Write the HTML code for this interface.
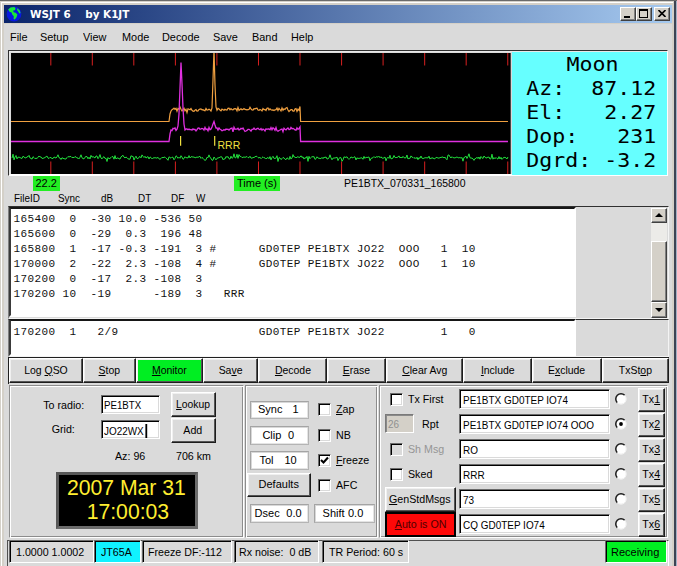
<!DOCTYPE html>
<html><head><meta charset="utf-8"><title>WSJT 6 by K1JT</title>
<style>
*{box-sizing:border-box;margin:0;padding:0}
html,body{width:677px;height:566px;overflow:hidden;background:#dadada}
body{position:relative;font-family:"Liberation Sans",sans-serif;font-size:11px;line-height:13px;color:#000}
.a{position:absolute;white-space:nowrap}
.t{display:inline-block;white-space:nowrap}
u{text-decoration:underline}
.title{left:4px;top:5px;width:668px;height:18px;background:linear-gradient(90deg,#0a246a 0%,#a6caf0 100%)}
.ttext{left:30px;top:7.1px;color:#fff;font:bold 10.5px/14px "DejaVu Sans","Liberation Sans",sans-serif;white-space:pre;transform:scaleX(.99);transform-origin:0 0}
.cap{top:7px;width:16px;height:14px;background:#d4d0c8;border:1px solid;border-color:#fff #404040 #404040 #fff;box-shadow:inset -1px -1px #808080}
.btn{background:#dadada;border:1px solid;border-color:#fff #1c1c1c #1c1c1c #fff;box-shadow:inset -1px -1px #555,inset 1px 1px #f0f0f0;text-align:center}
.sunk{border:1px solid;border-color:#6a6a6a #fff #fff #6a6a6a;box-shadow:inset 1px 1px #000,inset -1px -1px #dadada;background:#fff}
.groove{border:1px solid;border-color:#8c8c8c #fff #fff #8c8c8c;box-shadow:inset 1px 1px #fff,inset -1px -1px #8c8c8c}
.mono{font-family:"Liberation Mono",monospace;font-size:11px;letter-spacing:0.4px;line-height:15px;white-space:pre;color:#111}
.ridge{background:#fff;border:1px solid;border-color:#a4a4a4 #b4b4b4 #b4b4b4 #a4a4a4;box-shadow:inset 1px 1px #d8d8d8,inset -1px -1px #e4e4e4}
.tfr{border:1px solid;border-color:#303030 #f4f4f4 #f4f4f4 #808080}
.tw{background:#fff;border:2px solid;border-color:#161616 #fff #fff #3a3a3a}
.nbtn{background:#d4d0c8;border:1px solid;border-color:#fff #404040 #404040 #fff;box-shadow:inset -1px -1px #808080,inset 1px 1px #d4d0c8}
.cb{width:13px;height:13px;background:#fff;border:1px solid;border-color:#6a6a6a #fff #fff #6a6a6a;box-shadow:inset 1px 1px #000,inset -1px -1px #dadada}
.rb{width:12px;height:12px;border-radius:50%;background:#fff;border:1px solid;border-color:#6a6a6a #fff #fff #6a6a6a;box-shadow:inset 1px 1px #303030}
.st{top:540px;height:22.8px;border:1px solid;border-color:#6a6a6a #fff #fff #6a6a6a;box-shadow:inset 1px 1px #000}
</style></head><body>

<!-- window frame -->
<div class="a" style="left:0;top:0;width:677px;height:24px;background:#d4d0c8"></div>
<div class="a" style="left:0;top:0;width:4px;height:566px;background:#d4d0c8"></div>
<div class="a" style="left:672px;top:0;width:5px;height:566px;background:#d4d0c8"></div>
<div class="a" style="left:0;top:0;width:677px;height:1px;background:#6a6a6a"></div>
<div class="a" style="left:1px;top:2px;width:672px;height:1px;background:#fff"></div>
<div class="a" style="left:1px;top:2px;width:1px;height:564px;background:#fff"></div>
<div class="a" style="left:674px;top:1px;width:3px;height:565px;background:#a4b0c4"></div>
<div class="a" style="left:674px;top:1px;width:1.6px;height:565px;background:#3c4454"></div>
<div class="a title"></div>
<svg class="a" style="left:6px;top:6px" width="16" height="16" viewBox="0 0 16 16"><circle cx="8" cy="8" r="7.4" fill="#0818e0"/><path d="M2.2 3.6 L4.5 1.6 L8.2 1 L9.6 2.2 L9 4.2 L7.2 4.6 L7.6 6.2 L9.6 6.8 L11.4 8.6 L10.6 11.2 L8.8 13.4 L7.6 13 L7.8 10.2 L6.2 8.4 L5.6 6.4 L3.6 5.8 Z" fill="#18e838"/><path d="M11.4 2.2 L13.6 4.2 L14.6 7 L13.4 7.4 L12.2 5.4 L11 4 Z" fill="#18e838"/></svg>
<div class="a ttext">WSJT 6    by K1JT</div>
<div class="a cap" style="left:620px"><div class="a" style="left:3px;top:8px;width:6px;height:2px;background:#000"></div></div>
<div class="a cap" style="left:636px"><div class="a" style="left:2px;top:1px;width:9px;height:9px;border:1px solid #000;border-top-width:2px"></div></div>
<div class="a cap" style="left:654px"><svg class="a" style="left:3px;top:2px" width="8" height="7" viewBox="0 0 8 7"><path d="M0.5 0 L7.5 7 M7.5 0 L0.5 7" stroke="#000" stroke-width="1.6"/></svg></div>

<div class="a menu" style="left:10px;top:30.9px;transform:scaleX(0.99);transform-origin:0 0;">File</div>
<div class="a menu" style="left:40px;top:30.9px;transform:scaleX(0.99);transform-origin:0 0;">Setup</div>
<div class="a menu" style="left:83px;top:30.9px;transform:scaleX(0.99);transform-origin:0 0;">View</div>
<div class="a menu" style="left:122px;top:30.9px;transform:scaleX(0.99);transform-origin:0 0;">Mode</div>
<div class="a menu" style="left:162px;top:30.9px;transform:scaleX(0.99);transform-origin:0 0;">Decode</div>
<div class="a menu" style="left:213px;top:30.9px;transform:scaleX(0.99);transform-origin:0 0;">Save</div>
<div class="a menu" style="left:252px;top:30.9px;transform:scaleX(0.99);transform-origin:0 0;">Band</div>
<div class="a menu" style="left:290.5px;top:30.9px;transform:scaleX(0.99);transform-origin:0 0;">Help</div>
<div class="a" style="left:8px;top:50px;width:660px;height:126px;border:1px solid;border-color:#303030 #fff #fff #303030;box-shadow:inset 1px 1px #e8e8e8,inset -1px -1px #fff"></div>
<svg style="position:absolute;left:11px;top:53px" width="499.7" height="121.2" viewBox="0 0 499.7 121.2">
<rect width="499.7" height="121.2" fill="#000"/>
<g stroke="#d82020" stroke-width="1"><line x1="39.8" y1="0" x2="39.8" y2="12.5"/><line x1="39.8" y1="108.5" x2="39.8" y2="121.2"/><line x1="81.3" y1="0" x2="81.3" y2="12.5"/><line x1="81.3" y1="108.5" x2="81.3" y2="121.2"/><line x1="122.8" y1="0" x2="122.8" y2="12.5"/><line x1="122.8" y1="108.5" x2="122.8" y2="121.2"/><line x1="164.4" y1="0" x2="164.4" y2="12.5"/><line x1="164.4" y1="108.5" x2="164.4" y2="121.2"/><line x1="205.9" y1="0" x2="205.9" y2="12.5"/><line x1="205.9" y1="108.5" x2="205.9" y2="121.2"/><line x1="247.5" y1="0" x2="247.5" y2="12.5"/><line x1="247.5" y1="108.5" x2="247.5" y2="121.2"/><line x1="289.0" y1="0" x2="289.0" y2="12.5"/><line x1="289.0" y1="108.5" x2="289.0" y2="121.2"/><line x1="330.6" y1="0" x2="330.6" y2="12.5"/><line x1="330.6" y1="108.5" x2="330.6" y2="121.2"/><line x1="372.1" y1="0" x2="372.1" y2="12.5"/><line x1="372.1" y1="108.5" x2="372.1" y2="121.2"/><line x1="413.7" y1="0" x2="413.7" y2="12.5"/><line x1="413.7" y1="108.5" x2="413.7" y2="121.2"/><line x1="455.2" y1="0" x2="455.2" y2="12.5"/><line x1="455.2" y1="108.5" x2="455.2" y2="121.2"/><line x1="496.8" y1="0" x2="496.8" y2="12.5"/><line x1="496.8" y1="108.5" x2="496.8" y2="121.2"/></g>
<polyline fill="none" stroke="#22e03c" stroke-width="1" points="1.0,105.1 2.0,101.2 3.0,106.9 4.0,104.0 5.0,102.5 6.0,105.9 7.0,104.1 8.0,104.3 9.0,104.4 10.0,105.3 11.0,105.4 12.0,103.2 13.0,104.0 14.0,104.8 15.0,105.0 16.0,103.7 17.0,103.8 18.0,102.4 19.0,105.1 20.0,105.3 21.0,106.2 22.0,103.7 23.0,104.6 24.0,105.7 25.0,105.1 26.0,105.6 27.0,104.2 28.0,103.0 29.0,104.0 30.0,103.9 31.0,105.5 32.0,105.3 33.0,105.0 34.0,104.5 35.0,103.7 36.0,103.1 37.0,105.1 38.0,105.5 39.0,104.3 40.0,104.8 41.0,105.4 42.0,105.6 43.0,104.0 44.0,104.5 45.0,105.1 46.0,103.8 47.0,101.8 48.0,104.7 49.0,105.0 50.0,106.5 51.0,104.7 52.0,105.4 53.0,105.6 54.0,106.0 55.0,106.0 56.0,104.5 57.0,103.5 58.0,104.1 59.0,103.4 60.0,103.6 61.0,104.7 62.0,104.2 63.0,104.8 64.0,103.5 65.0,104.1 66.0,105.2 67.0,104.9 68.0,105.9 69.0,104.2 70.0,101.8 71.0,104.8 72.0,105.6 73.0,105.9 74.0,104.2 75.0,103.5 76.0,103.6 77.0,105.8 78.0,104.2 79.0,106.0 80.0,102.4 81.0,104.3 82.0,103.5 83.0,104.3 84.0,105.0 85.0,103.0 86.0,103.1 87.0,105.7 88.0,104.2 89.0,101.6 90.0,105.1 91.0,105.9 92.0,104.4 93.0,103.7 94.0,105.5 95.0,105.3 96.0,108.5 97.0,104.5 98.0,105.9 99.0,105.3 100.0,104.6 101.0,103.5 102.0,103.7 103.0,106.2 104.0,102.6 105.0,106.0 106.0,105.0 107.0,105.0 108.0,105.7 109.0,106.1 110.0,103.9 111.0,103.1 112.0,102.3 113.0,104.2 114.0,104.9 115.0,104.0 116.0,104.7 117.0,105.9 118.0,106.1 119.0,106.2 120.0,102.7 121.0,103.5 122.0,103.4 123.0,107.1 124.0,104.8 125.0,103.2 126.0,105.5 127.0,105.7 128.0,104.1 129.0,103.5 130.0,104.9 131.0,101.9 132.0,103.3 133.0,104.5 134.0,103.3 135.0,105.1 136.0,104.2 137.0,103.6 138.0,106.0 139.0,104.0 140.0,104.5 141.0,105.9 142.0,104.9 143.0,105.0 144.0,104.6 145.0,105.0 146.0,105.1 147.0,104.3 148.0,105.9 149.0,106.2 150.0,105.6 151.0,104.3 152.0,104.9 153.0,104.1 154.0,104.2 155.0,105.2 156.0,105.9 157.0,107.3 158.0,103.8 159.0,104.5 160.0,105.2 161.0,104.2 162.0,104.3 163.0,106.8 164.0,105.4 165.0,102.8 166.0,103.6 167.0,105.3 168.0,104.2 169.0,105.3 170.0,102.7 171.0,104.1 172.0,106.3 173.0,105.6 174.0,103.7 175.0,104.9 176.0,104.5 177.0,105.1 178.0,102.6 179.0,105.0 180.0,103.8 181.0,103.7 182.0,104.2 183.0,103.9 184.0,104.8 185.0,104.6 186.0,103.9 187.0,104.5 188.0,103.7 189.0,103.4 190.0,105.4 191.0,104.4 192.0,105.3 193.0,106.6 194.0,107.4 195.0,106.9 196.0,104.3 197.0,104.7 198.0,101.9 199.0,104.5 200.0,105.2 201.0,107.3 202.0,107.2 203.0,104.0 204.0,105.4 205.0,106.9 206.0,105.3 207.0,105.0 208.0,104.7 209.0,104.2 210.0,103.7 211.0,104.1 212.0,106.8 213.0,105.9 214.0,106.0 215.0,103.5 216.0,104.4 217.0,103.5 218.0,105.7 219.0,106.1 220.0,103.2 221.0,105.3 222.0,104.6 223.0,100.8 224.0,104.9 225.0,104.7 226.0,101.3 227.0,105.4 228.0,101.6 229.0,103.5 230.0,103.4 231.0,104.6 232.0,104.5 233.0,103.8 234.0,104.5 235.0,103.9 236.0,103.6 237.0,104.6 238.0,104.7 239.0,103.2 240.0,105.1 241.0,105.2 242.0,104.5 243.0,104.5 244.0,103.9 245.0,103.2 246.0,103.5 247.0,104.5 248.0,105.1 249.0,104.2 250.0,105.7 251.0,104.7 252.0,103.8 253.0,104.8 254.0,104.9 255.0,105.9 256.0,105.1 257.0,104.4 258.0,105.8 259.0,103.6 260.0,106.9 261.0,104.6 262.0,103.3 263.0,105.5 264.0,105.3 265.0,105.2 266.0,102.7 267.0,108.5 268.0,104.6 269.0,105.0 270.0,106.6 271.0,105.7 272.0,104.5 273.0,104.9 274.0,106.2 275.0,106.7 276.0,104.9 277.0,105.4 278.0,106.6 279.0,103.4 280.0,106.1 281.0,105.1 282.0,101.6 283.0,104.0 284.0,103.9 285.0,105.0 286.0,104.0 287.0,103.8 288.0,104.4 289.0,104.2 290.0,102.8 291.0,104.6 292.0,103.8 293.0,106.1 294.0,104.6 295.0,105.2 296.0,103.4 297.0,108.4 298.0,103.4 299.0,105.7 300.0,104.6 301.0,103.4 302.0,104.1 303.0,103.5 304.0,106.4 305.0,105.8 306.0,103.8 307.0,105.0 308.0,105.3 309.0,105.4 310.0,105.7 311.0,104.4 312.0,105.7 313.0,104.1 314.0,104.7 315.0,103.9 316.0,106.0 317.0,105.8 318.0,104.9 319.0,101.8 320.0,104.8 321.0,106.8 322.0,105.1 323.0,105.1 324.0,104.9 325.0,104.8 326.0,104.1 327.0,107.6 328.0,105.4 329.0,104.6 330.0,104.7 331.0,108.3 332.0,106.9 333.0,103.8 334.0,104.4 335.0,104.3 336.0,103.8 337.0,105.4 338.0,106.4 339.0,105.4 340.0,103.9 341.0,104.6 342.0,104.9 343.0,103.9 344.0,103.9 345.0,107.0 346.0,104.8 347.0,105.6 348.0,105.2 349.0,105.4 350.0,104.8 351.0,104.9 352.0,106.3 353.0,103.4 354.0,105.4 355.0,104.2 356.0,104.6 357.0,104.3 358.0,104.0 359.0,107.7 360.0,105.5 361.0,105.1 362.0,104.7 363.0,103.6 364.0,104.7 365.0,104.2 366.0,103.5 367.0,104.3 368.0,103.2 369.0,104.8 370.0,103.8 371.0,105.1 372.0,105.2 373.0,104.9 374.0,104.0 375.0,107.8 376.0,105.3 377.0,104.2 378.0,105.4 379.0,102.3 380.0,105.8 381.0,105.6 382.0,105.1 383.0,102.5 384.0,104.5 385.0,104.6 386.0,104.4 387.0,104.1 388.0,102.9 389.0,105.0 390.0,104.1 391.0,105.0 392.0,103.4 393.0,104.7 394.0,104.9 395.0,104.8 396.0,102.0 397.0,106.0 398.0,105.3 399.0,105.4 400.0,102.9 401.0,104.2 402.0,104.4 403.0,105.4 404.0,104.5 405.0,105.7 406.0,104.2 407.0,106.7 408.0,104.6 409.0,105.4 410.0,103.0 411.0,105.3 412.0,105.4 413.0,105.4 414.0,104.6 415.0,104.9 416.0,104.7 417.0,105.0 418.0,103.2 419.0,106.1 420.0,104.8 421.0,105.5 422.0,104.6 423.0,106.0 424.0,105.5 425.0,104.7 426.0,104.3 427.0,105.2 428.0,105.0 429.0,104.8 430.0,104.3 431.0,104.3 432.0,103.9 433.0,105.0 434.0,104.1 435.0,105.8 436.0,106.8 437.0,102.1 438.0,102.0 439.0,103.9 440.0,105.0 441.0,103.7 442.0,104.7 443.0,104.7 444.0,105.0 445.0,104.4 446.0,104.0 447.0,104.6 448.0,105.0 449.0,104.4 450.0,105.2 451.0,104.5 452.0,108.2 453.0,104.4 454.0,104.2 455.0,103.1 456.0,105.5 457.0,103.5 458.0,100.8 459.0,104.8 460.0,105.1 461.0,105.1 462.0,105.8 463.0,107.4 464.0,105.6 465.0,105.5 466.0,104.2 467.0,105.6 468.0,104.0 469.0,106.2 470.0,103.5 471.0,104.8 472.0,105.5 473.0,103.0 474.0,104.0 475.0,105.3 476.0,104.4 477.0,104.4 478.0,104.0 479.0,106.1 480.0,105.7 481.0,101.2 482.0,106.2 483.0,104.6 484.0,105.8 485.0,104.5 486.0,105.5 487.0,106.1 488.0,103.6 489.0,106.0 490.0,104.3 491.0,106.4 492.0,105.2 493.0,104.3 494.0,104.5 495.0,104.8 496.0,106.0 497.0,104.0"/>
<polyline fill="none" stroke="#f0a040" stroke-width="1.2" points="0.0,68.5 158.0,68.5 159.0,61.0 160.0,58.0 161.0,56.7 162.0,56.1 163.0,55.2 164.0,56.3 165.0,55.3 166.0,58.2 167.0,55.4 168.0,56.2 169.0,54.0 170.0,56.3 171.0,58.0 172.0,56.5 173.0,55.2 174.0,57.7 175.0,56.3 176.0,59.6 177.0,55.8 178.0,56.2 179.0,56.7 180.0,55.5 181.0,57.3 182.0,58.1 183.0,58.4 184.0,57.2 185.0,56.6 186.0,58.0 187.0,57.9 188.0,56.5 189.0,56.2 190.0,55.9 191.0,56.9 192.0,56.6 193.0,57.4 194.0,57.7 195.0,55.5 196.0,57.1 197.0,57.0 198.0,56.3 199.0,56.8 200.0,58.0 201.0,55.0 202.0,27.0 203.0,-3.0 204.0,32.0 205.0,54.0 206.0,57.2 207.0,55.4 208.0,55.9 209.0,57.0 210.0,57.9 211.0,56.1 212.0,56.7 213.0,57.3 214.0,56.3 215.0,56.9 216.0,57.0 217.0,55.3 218.0,55.1 219.0,56.8 220.0,55.6 221.0,56.6 222.0,56.8 223.0,55.8 224.0,55.6 225.0,55.8 226.0,57.8 227.0,54.4 228.0,57.4 229.0,56.5 230.0,55.8 231.0,56.8 232.0,56.4 233.0,55.6 234.0,56.4 235.0,56.6 236.0,56.9 237.0,56.6 238.0,56.4 239.0,54.3 240.0,55.9 241.0,57.0 242.0,57.1 243.0,55.7 244.0,55.9 245.0,55.4 246.0,55.2 247.0,57.0 248.0,57.4 249.0,56.5 250.0,56.9 251.0,57.9 252.0,55.5 253.0,56.6 254.0,56.5 255.0,57.5 256.0,55.2 257.0,55.0 258.0,57.0 259.0,55.9 260.0,56.8 261.0,57.2 262.0,57.0 263.0,57.5 264.0,56.8 265.0,56.6 266.0,55.1 267.0,57.5 268.0,55.3 269.0,56.5 270.0,57.9 271.0,55.0 272.0,57.3 273.0,55.8 274.0,56.5 275.0,55.0 276.0,54.6 277.0,57.0 278.0,58.6 279.0,57.4 280.0,56.7 281.0,56.7 282.0,58.2 283.0,58.2 284.0,56.0 285.0,55.6 286.0,58.4 287.0,56.2 288.0,57.3 289.0,53.5 289.6,68.5 497.0,68.5"/>
<polyline fill="none" stroke="#e030e0" stroke-width="1.3" points="0.0,88.5 158.0,88.5 159.0,81.0 160.0,77.0 161.0,77.6 162.0,75.4 163.0,75.7 164.0,74.8 165.0,77.5 166.0,76.1 167.0,73.0 168.0,61.0 169.0,35.0 170.0,9.5 171.0,31.0 172.0,55.0 173.0,71.0 174.0,77.0 175.0,76.0 176.0,76.0 177.0,76.8 178.0,76.0 179.0,76.8 180.0,76.4 181.0,77.2 182.0,75.9 183.0,76.5 184.0,76.5 185.0,77.9 186.0,76.7 187.0,75.2 188.0,75.0 189.0,76.3 190.0,75.9 191.0,75.4 192.0,75.7 193.0,77.1 194.0,74.4 195.0,76.6 196.0,76.0 197.0,77.9 198.0,74.5 199.0,76.8 200.0,76.1 201.0,74.0 202.0,71.0 203.0,68.5 204.0,72.0 205.0,75.0 206.0,74.9 207.0,77.0 208.0,74.9 209.0,76.2 210.0,76.8 211.0,77.8 212.0,77.4 213.0,76.6 214.0,77.2 215.0,76.1 216.0,76.4 217.0,76.3 218.0,77.2 219.0,76.1 220.0,75.3 221.0,75.1 222.0,78.9 223.0,74.2 224.0,76.2 225.0,76.1 226.0,76.1 227.0,75.3 228.0,76.9 229.0,76.4 230.0,75.3 231.0,75.9 232.0,75.0 233.0,76.8 234.0,78.4 235.0,78.0 236.0,77.4 237.0,76.3 238.0,76.3 239.0,76.9 240.0,78.1 241.0,76.4 242.0,76.3 243.0,75.0 244.0,76.4 245.0,76.5 246.0,75.6 247.0,75.3 248.0,76.3 249.0,76.7 250.0,75.6 251.0,77.1 252.0,76.0 253.0,76.7 254.0,78.0 255.0,75.8 256.0,76.3 257.0,76.0 258.0,76.0 259.0,76.7 260.0,74.6 261.0,76.7 262.0,74.8 263.0,75.6 264.0,77.2 265.0,74.5 266.0,77.7 267.0,78.3 268.0,77.5 269.0,77.0 270.0,76.4 271.0,76.1 272.0,78.7 273.0,75.2 274.0,76.3 275.0,76.9 276.0,75.8 277.0,75.0 278.0,76.6 279.0,76.4 280.0,74.5 281.0,75.7 282.0,75.5 283.0,76.0 284.0,76.9 285.0,77.2 286.0,74.9 287.0,76.3 288.0,75.6 289.0,74.0 289.6,88.5 497.0,88.5"/>
<g stroke="#f0e040" stroke-width="1.2"><line x1="169.6" y1="83" x2="169.6" y2="92.69999999999999"/><line x1="203.7" y1="83" x2="203.7" y2="92.69999999999999"/></g>
<text x="206.5" y="95.80000000000001" fill="#f0e040" font-family="Liberation Sans, sans-serif" font-size="10.5">RRR</text>
</svg>
<div class="a" style="left:511.5px;top:51.5px;width:155px;height:123.2px;background:#66ffff"></div>
<div class="a" style="left:512px;top:52px;width:155px;height:122px;font-family:'DejaVu Sans Mono',monospace;font-size:19.6px;line-height:24px;transform:scaleX(1.102);transform-origin:0 0"><div class="a" style="left:2.8px;top:0.5px;width:140.6px;text-align:center">Moon</div><div class="a" style="left:13px;top:25px;white-space:pre">Az:  87.12
El:   2.27
Dop:   231
Dgrd: -3.2</div></div>

<div class="a" style="left:33px;top:176.3px;width:27.4px;height:14.6px;background:#22ee22"></div>
<div class="a lbl" style="left:35.5px;top:177.0px;transform:scaleX(1.0);transform-origin:0 0;">22.2</div>
<div class="a" style="left:234px;top:176.3px;width:45.5px;height:14.8px;background:#22ee22"></div>
<div class="a lbl" style="left:237px;top:177.0px;transform:scaleX(1.0);transform-origin:0 0;">Time (s)</div>
<div class="a lbl" style="left:344.2px;top:176.8px;transform:scaleX(0.95);transform-origin:0 0;">PE1BTX_070331_165800</div>
<div class="a lbl" style="left:14px;top:191.8px;transform:scaleX(0.9);transform-origin:0 0;">FileID</div>
<div class="a lbl" style="left:58px;top:191.8px;transform:scaleX(0.9);transform-origin:0 0;">Sync</div>
<div class="a lbl" style="left:100.5px;top:191.8px;transform:scaleX(0.9);transform-origin:0 0;">dB</div>
<div class="a lbl" style="left:137.5px;top:191.8px;transform:scaleX(0.9);transform-origin:0 0;">DT</div>
<div class="a lbl" style="left:171px;top:191.8px;transform:scaleX(0.9);transform-origin:0 0;">DF</div>
<div class="a lbl" style="left:195.5px;top:191.8px;transform:scaleX(0.9);transform-origin:0 0;">W</div>
<div class="a tfr" style="left:8px;top:206px;width:661px;height:113px"></div>
<div class="a tw" style="left:9px;top:207px;width:566.5px;height:110px"></div>
<div class="a mono" style="left:13.6px;top:211.9px">165400  0  -30 10.0 -536 50
165600  0  -29  0.3  196 48
165800  1  -17 -0.3 -191  3 #      GD0TEP PE1BTX JO22  OOO   1  10
170000  2  -22  2.3 -108  4 #      GD0TEP PE1BTX JO22  OOO   1  10
170200  0  -17  2.3 -108  3
170200 10  -19      -189  3   RRR</div>
<div class="a" style="left:651px;top:208px;width:16px;height:110px;background:#ecebe8"></div>
<div class="a nbtn" style="left:651px;top:208px;width:16px;height:15px"><div class="a" style="left:3px;top:4px;border:4px solid transparent;border-top:0;border-bottom:4px solid #000"></div></div>
<div class="a nbtn" style="left:651px;top:302px;width:16px;height:16px"><div class="a" style="left:3px;top:5px;border:4px solid transparent;border-bottom:0;border-top:4px solid #000"></div></div>
<div class="a nbtn" style="left:651px;top:241px;width:16px;height:61px"></div>
<div class="a tfr" style="left:8px;top:319px;width:661px;height:37.5px"></div>
<div class="a tw" style="left:9px;top:319px;width:566.5px;height:36.5px"></div>
<div class="a mono" style="left:13.6px;top:324.9px">170200  1   2/9                    GD0TEP PE1BTX JO22        1   0</div>

<div class="a" style="left:8px;top:357px;width:661px;height:26.5px;border:1px solid #202020;border-right:0;border-bottom:0"></div>
<div class="a btn" style="left:9px;top:358px;width:74px;height:25px;"><span class="t" style="position:relative;top:5.0px;transform:scaleX(0.95)">Log <u>Q</u>SO</span></div>
<div class="a btn" style="left:83px;top:358px;width:53px;height:25px;"><span class="t" style="position:relative;top:5.0px;transform:scaleX(0.95)"><u>S</u>top</span></div>
<div class="a btn" style="left:136px;top:358px;width:67px;height:25px;background:#00ee22"><span class="t" style="position:relative;top:5.0px;transform:scaleX(0.95)"><u>M</u>onitor</span></div>
<div class="a btn" style="left:203px;top:358px;width:55px;height:25px;"><span class="t" style="position:relative;top:5.0px;transform:scaleX(0.95)">Sa<u>v</u>e</span></div>
<div class="a btn" style="left:258px;top:358px;width:69px;height:25px;"><span class="t" style="position:relative;top:5.0px;transform:scaleX(0.95)"><u>D</u>ecode</span></div>
<div class="a btn" style="left:327px;top:358px;width:59px;height:25px;"><span class="t" style="position:relative;top:5.0px;transform:scaleX(0.95)"><u>E</u>rase</span></div>
<div class="a btn" style="left:386px;top:358px;width:77px;height:25px;"><span class="t" style="position:relative;top:5.0px;transform:scaleX(0.95)"><u>C</u>lear Avg</span></div>
<div class="a btn" style="left:463px;top:358px;width:69px;height:25px;"><span class="t" style="position:relative;top:5.0px;transform:scaleX(0.95)"><u>I</u>nclude</span></div>
<div class="a btn" style="left:532px;top:358px;width:70px;height:25px;"><span class="t" style="position:relative;top:5.0px;transform:scaleX(0.95)">E<u>x</u>clude</span></div>
<div class="a btn" style="left:602px;top:358px;width:67px;height:25px;"><span class="t" style="position:relative;top:5.0px;transform:scaleX(0.95)">TxSt<u>o</u>p</span></div>
<div class="a groove" style="left:9px;top:385px;width:235px;height:152.5px"></div>
<div class="a lbl" style="right:592.5px;top:398.8px;transform:scaleX(0.97);transform-origin:100% 0;">To radio:</div>
<div class="a lbl" style="right:602px;top:423.2px;transform:scaleX(0.97);transform-origin:100% 0;">Grid:</div>
<div class="a sunk ent" style="left:100.5px;top:394.5px;width:59.5px;height:19px;padding-left:2px;"><span class="t" style="position:relative;top:3.4px;transform:scaleX(0.88);transform-origin:0 50%">PE1BTX</span></div>
<div class="a sunk ent" style="left:100.5px;top:420px;width:59.5px;height:19px;padding-left:2px;"><span class="t" style="position:relative;top:3.3px;transform:scaleX(0.9);transform-origin:0 50%">JO22WX<span style="display:inline-block;width:2.2px;height:14px;background:#000;vertical-align:-3px;margin-left:1.6px"></span></span></div>
<div class="a btn" style="left:171px;top:392px;width:44.5px;height:24.5px;"><span class="t" style="position:relative;top:5.3px;transform:scaleX(0.94)"><u>L</u>ookup</span></div>
<div class="a btn" style="left:171px;top:418px;width:44.5px;height:24.5px;"><span class="t" style="position:relative;top:5.0px;transform:scaleX(0.97)">Add</span></div>
<div class="a lbl" style="left:114.5px;top:449.7px;transform:scaleX(0.97);transform-origin:0 0;">Az: 96</div>
<div class="a lbl" style="left:176px;top:449.7px;transform:scaleX(0.97);transform-origin:0 0;">706 km</div>
<div class="a" style="left:56px;top:471.5px;width:141.8px;height:57.3px;background:#000;border:3px solid;border-color:#585858 #6c6c6c #6c6c6c #585858;color:#ffee30;font-size:21.2px;line-height:23.5px;text-align:center;padding-top:1.7px;padding-right:1px">2007 Mar 31<br><span style="position:relative;left:1.5px">17:00:03</span></div>
<div class="a groove" style="left:245px;top:385px;width:133px;height:152.5px"></div>
<div class="a ridge" style="left:249.5px;top:400.5px;width:59px;height:18.5px"></div>
<div class="a lbl" style="left:258px;top:402.7px;transform:scaleX(1.0);transform-origin:0 0;">Sync</div>
<div class="a lbl" style="left:292.4px;top:402.7px;transform:scaleX(1.0);transform-origin:0 0;">1</div>
<div class="a ridge" style="left:249.5px;top:426px;width:59px;height:18.5px"></div>
<div class="a lbl" style="left:262.4px;top:428.8px;transform:scaleX(1.0);transform-origin:0 0;">Clip</div>
<div class="a lbl" style="left:288px;top:428.8px;transform:scaleX(1.0);transform-origin:0 0;">0</div>
<div class="a ridge" style="left:249.5px;top:451px;width:59px;height:18.5px"></div>
<div class="a lbl" style="left:259.5px;top:453.6px;transform:scaleX(1.0);transform-origin:0 0;">Tol</div>
<div class="a lbl" style="left:284.5px;top:453.6px;transform:scaleX(1.0);transform-origin:0 0;">10</div>
<div class="a btn" style="left:247px;top:472.5px;width:63.5px;height:24px;"><span class="t" style="position:relative;top:4.1px;transform:scaleX(1.0)">Defaults</span></div>
<div class="a ridge" style="left:249.5px;top:503.5px;width:59px;height:19px"></div>
<div class="a lbl" style="left:254.6px;top:506.6px;transform:scaleX(1.0);transform-origin:0 0;">Dsec</div>
<div class="a lbl" style="left:286.3px;top:506.6px;transform:scaleX(1.0);transform-origin:0 0;">0.0</div>
<div class="a ridge" style="left:314px;top:503.5px;width:61px;height:19px"></div>
<div class="a lbl" style="left:322.6px;top:506.6px;transform:scaleX(1.0);transform-origin:0 0;">Shift</div>
<div class="a lbl" style="left:348px;top:506.6px;transform:scaleX(1.0);transform-origin:0 0;">0.0</div>
<div class="a cb" style="left:318px;top:403px"></div>
<div class="a lbl" style="left:336px;top:403.2px;transform:scaleX(0.97);transform-origin:0 0;"><u>Z</u>ap</div>
<div class="a cb" style="left:318px;top:429px"></div>
<div class="a lbl" style="left:336px;top:428.6px;transform:scaleX(0.97);transform-origin:0 0;">NB</div>
<div class="a cb" style="left:318px;top:454px"><svg class="a" style="left:1px;top:1px" width="9" height="9" viewBox="0 0 9 9"><path d="M1 4 L3.5 6.5 L8 1.5" fill="none" stroke="#000" stroke-width="2.1"/></svg></div>
<div class="a lbl" style="left:336px;top:454.0px;transform:scaleX(0.97);transform-origin:0 0;"><u>F</u>reeze</div>
<div class="a cb" style="left:318px;top:479px"></div>
<div class="a lbl" style="left:336px;top:479.0px;transform:scaleX(0.97);transform-origin:0 0;">AFC</div>
<div class="a groove" style="left:379px;top:385px;width:288.5px;height:152.5px"></div>
<div class="a cb" style="left:390px;top:393px"></div>
<div class="a lbl" style="left:408px;top:393.3px;transform:scaleX(0.97);transform-origin:0 0;">Tx First</div>
<div class="a sunk ent" style="left:385px;top:414px;width:29.3px;height:19px;padding-left:2px;background:#d4d0c8;color:#909090;border-color:#7a7a7a #fff #fff #7a7a7a;box-shadow:inset 1px 1px #8a8a8a"><span class="t" style="position:relative;top:3.2px;transform:scaleX(0.9);transform-origin:0 50%">26</span></div>
<div class="a lbl" style="left:422px;top:418.3px;transform:scaleX(0.97);transform-origin:0 0;">Rpt</div>
<div class="a cb" style="left:390px;top:443px;background:#dadada"></div>
<div class="a lbl" style="left:408px;top:443.3px;transform:scaleX(0.97);transform-origin:0 0;color:#959595">Sh Msg</div>
<div class="a cb" style="left:390px;top:468px"></div>
<div class="a lbl" style="left:408px;top:468.3px;transform:scaleX(0.97);transform-origin:0 0;">Sked</div>
<div class="a btn" style="left:385px;top:487px;width:70.5px;height:24.5px;"><span class="t" style="position:relative;top:5.0px;transform:scaleX(0.97)"><u>G</u>enStdMsgs</span></div>
<div class="a" style="left:385px;top:511.5px;width:70.5px;height:25.5px;background:#ff0808;border:2px solid #000;text-align:center;color:#500000"><span class="t" style="position:relative;top:4.6px;transform:scaleX(.97)"><u>A</u>uto is ON</span></div>
<div class="a sunk ent" style="left:459px;top:388.7px;width:151px;height:20.8px;padding-left:2.5px;"><span class="t" style="position:relative;top:3.9px;transform:scaleX(0.905);transform-origin:0 50%">PE1BTX GD0TEP IO74</span></div>
<svg class="a" style="left:615px;top:393px" width="12" height="12" viewBox="0 0 12 12"><circle cx="6" cy="6" r="5" fill="#fff"/><path d="M2.3 9.7 A5.2 5.2 0 0 1 9.7 2.3" fill="none" stroke="#1c1c1c" stroke-width="1.5"/><path d="M9.7 2.3 A5.2 5.2 0 0 1 2.3 9.7" fill="none" stroke="#f2f2f2" stroke-width="1"/></svg>
<div class="a btn" style="left:638px;top:387.5px;width:27px;height:24.8px;"><span class="t" style="position:relative;top:4.4px;transform:scaleX(0.97)">Tx<u>1</u></span></div>
<div class="a sunk ent" style="left:459px;top:413.7px;width:151px;height:20.8px;padding-left:2.5px;"><span class="t" style="position:relative;top:3.9px;transform:scaleX(0.905);transform-origin:0 50%">PE1BTX GD0TEP IO74 OOO</span></div>
<svg class="a" style="left:615px;top:418px" width="12" height="12" viewBox="0 0 12 12"><circle cx="6" cy="6" r="5" fill="#fff"/><path d="M2.3 9.7 A5.2 5.2 0 0 1 9.7 2.3" fill="none" stroke="#1c1c1c" stroke-width="1.5"/><path d="M9.7 2.3 A5.2 5.2 0 0 1 2.3 9.7" fill="none" stroke="#f2f2f2" stroke-width="1"/><circle cx="6" cy="6" r="1.9" fill="#000"/></svg>
<div class="a btn" style="left:638px;top:412.5px;width:27px;height:24.8px;"><span class="t" style="position:relative;top:4.4px;transform:scaleX(0.97)">Tx<u>2</u></span></div>
<div class="a sunk ent" style="left:459px;top:438.7px;width:151px;height:20.8px;padding-left:2.5px;"><span class="t" style="position:relative;top:3.9px;transform:scaleX(0.905);transform-origin:0 50%">RO</span></div>
<svg class="a" style="left:615px;top:443px" width="12" height="12" viewBox="0 0 12 12"><circle cx="6" cy="6" r="5" fill="#fff"/><path d="M2.3 9.7 A5.2 5.2 0 0 1 9.7 2.3" fill="none" stroke="#1c1c1c" stroke-width="1.5"/><path d="M9.7 2.3 A5.2 5.2 0 0 1 2.3 9.7" fill="none" stroke="#f2f2f2" stroke-width="1"/></svg>
<div class="a btn" style="left:638px;top:437.5px;width:27px;height:24.8px;"><span class="t" style="position:relative;top:4.4px;transform:scaleX(0.97)">Tx<u>3</u></span></div>
<div class="a sunk ent" style="left:459px;top:463.7px;width:151px;height:20.8px;padding-left:2.5px;"><span class="t" style="position:relative;top:3.9px;transform:scaleX(0.905);transform-origin:0 50%">RRR</span></div>
<svg class="a" style="left:615px;top:468px" width="12" height="12" viewBox="0 0 12 12"><circle cx="6" cy="6" r="5" fill="#fff"/><path d="M2.3 9.7 A5.2 5.2 0 0 1 9.7 2.3" fill="none" stroke="#1c1c1c" stroke-width="1.5"/><path d="M9.7 2.3 A5.2 5.2 0 0 1 2.3 9.7" fill="none" stroke="#f2f2f2" stroke-width="1"/></svg>
<div class="a btn" style="left:638px;top:462.5px;width:27px;height:24.8px;"><span class="t" style="position:relative;top:4.4px;transform:scaleX(0.97)">Tx<u>4</u></span></div>
<div class="a sunk ent" style="left:459px;top:488.7px;width:151px;height:20.8px;padding-left:2.5px;"><span class="t" style="position:relative;top:3.9px;transform:scaleX(0.905);transform-origin:0 50%">73</span></div>
<svg class="a" style="left:615px;top:493px" width="12" height="12" viewBox="0 0 12 12"><circle cx="6" cy="6" r="5" fill="#fff"/><path d="M2.3 9.7 A5.2 5.2 0 0 1 9.7 2.3" fill="none" stroke="#1c1c1c" stroke-width="1.5"/><path d="M9.7 2.3 A5.2 5.2 0 0 1 2.3 9.7" fill="none" stroke="#f2f2f2" stroke-width="1"/></svg>
<div class="a btn" style="left:638px;top:487.5px;width:27px;height:24.8px;"><span class="t" style="position:relative;top:4.4px;transform:scaleX(0.97)">Tx<u>5</u></span></div>
<div class="a sunk ent" style="left:459px;top:513.7px;width:151px;height:20.8px;padding-left:2.5px;"><span class="t" style="position:relative;top:3.9px;transform:scaleX(0.905);transform-origin:0 50%">CQ GD0TEP IO74</span></div>
<svg class="a" style="left:615px;top:518px" width="12" height="12" viewBox="0 0 12 12"><circle cx="6" cy="6" r="5" fill="#fff"/><path d="M2.3 9.7 A5.2 5.2 0 0 1 9.7 2.3" fill="none" stroke="#1c1c1c" stroke-width="1.5"/><path d="M9.7 2.3 A5.2 5.2 0 0 1 2.3 9.7" fill="none" stroke="#f2f2f2" stroke-width="1"/></svg>
<div class="a btn" style="left:638px;top:512.5px;width:27px;height:24.8px;"><span class="t" style="position:relative;top:4.4px;transform:scaleX(0.97)">Tx<u>6</u></span></div>
<div class="a" style="left:7px;top:539.5px;width:662px;height:27px;border:1px solid;border-color:#505050 #fff #fff #505050;border-bottom:0"></div>
<div class="a st" style="left:8.5px;width:85.5px;"></div>
<div class="a lbl" style="left:15.9px;top:545.7px;transform:scaleX(0.97);transform-origin:0 0;">1.0000 1.0002</div>
<div class="a st" style="left:94px;width:46.5px;background:#10f2ff"></div>
<div class="a lbl" style="left:100.8px;top:545.7px;transform:scaleX(0.97);transform-origin:0 0;">JT65A</div>
<div class="a st" style="left:142px;width:89.5px;"></div>
<div class="a lbl" style="left:147.7px;top:545.7px;transform:scaleX(0.97);transform-origin:0 0;">Freeze DF:-112</div>
<div class="a st" style="left:234px;width:85px;"></div>
<div class="a lbl" style="left:239px;top:545.7px;transform:scaleX(0.97);transform-origin:0 0;">Rx noise:&nbsp; 0 dB</div>
<div class="a st" style="left:322px;width:86.5px;"></div>
<div class="a lbl" style="left:329px;top:545.7px;transform:scaleX(0.97);transform-origin:0 0;">TR Period: 60 s</div>
<div class="a st" style="left:604.5px;width:62.5px;background:#00ee22"></div>
<div class="a lbl" style="left:611px;top:545.7px;transform:scaleX(1.0);transform-origin:0 0;">Receiving</div>
</body></html>
